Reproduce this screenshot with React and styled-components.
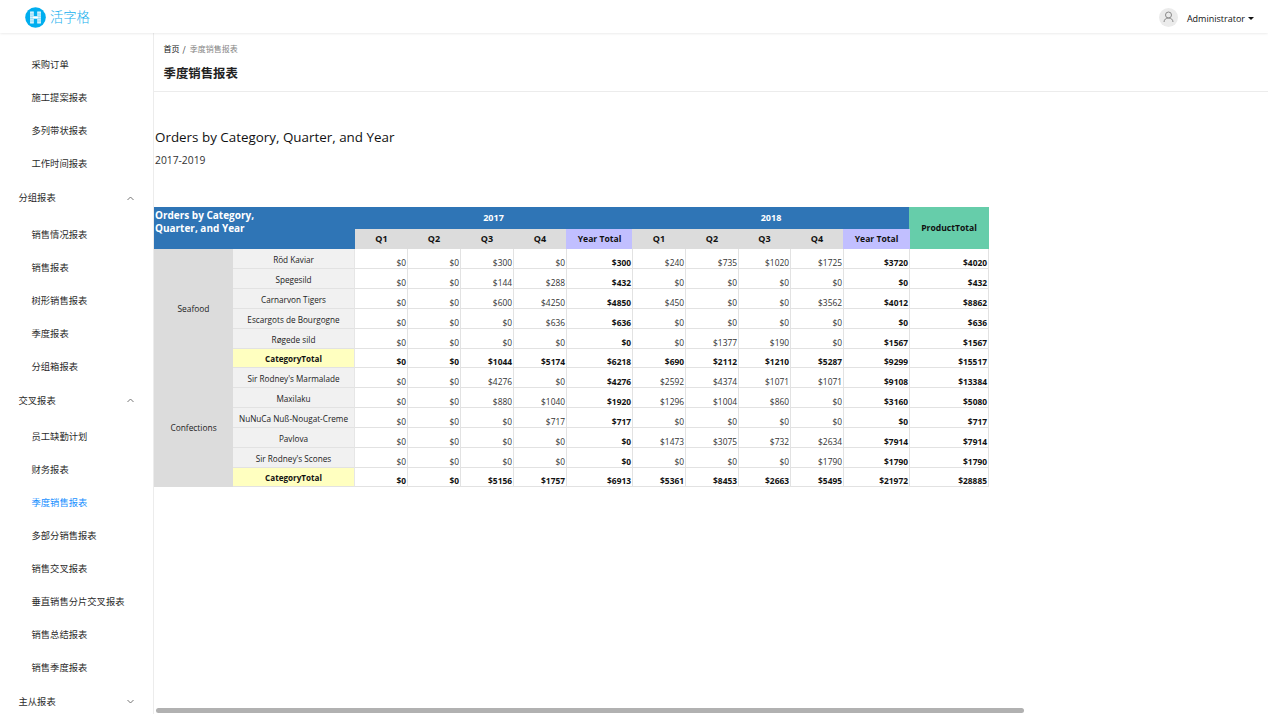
import React from "react";
import styled, { createGlobalStyle, css } from "styled-components";

const GlobalStyle = createGlobalStyle`
  * { box-sizing: border-box; }
  body {
    margin: 0;
    background: #fff;
    color: #222;
    font-family: "Open Sans", "Noto Sans CJK SC", sans-serif;
    overflow: hidden;
  }
`;

const Page = styled.div`
  height: 714px;
  display: flex;
  flex-direction: column;
`;

const Header = styled.header`
  height: 33px;
  flex: none;
  display: flex;
  align-items: center;
  justify-content: space-between;
  padding: 0 14px 0 25px;
  background: #fff;
  box-shadow: 0 0 3px rgba(0, 0, 0, 0.14);
  z-index: 1;
`;

const Brand = styled.div`
  display: flex;
  align-items: center;
  gap: 4px;
  color: #14b0ee;
  font: 300 13.3px/20px "Noto Sans CJK SC", sans-serif;
  padding-top: 1px;
  svg { display: block; }
`;

const User = styled.div`
  display: flex;
  align-items: center;
  font-size: 9px;
  color: #111;
  padding-top: 1px;
`;

const Avatar = styled.span`
  width: 19px;
  height: 19px;
  border-radius: 50%;
  background: #ebebeb;
  display: grid;
  place-items: center;
  margin-right: 9px;
`;

const UserName = styled.span`
  line-height: 16px;
  padding-top: 3px;
`;

const Caret = styled.span`
  margin: 2px 0 0 3px;
  border: 3px solid transparent;
  border-top-color: #111;
  border-bottom: 0;
`;

const Body = styled.div`
  flex: 1;
  display: flex;
  min-height: 0;
`;

const Sidebar = styled.nav`
  width: 154px;
  flex: none;
  border-right: 1px solid #ececec;
  padding-top: 14px;
  overflow: hidden;
  font: 9.3px/14px "Noto Sans CJK SC", sans-serif;
`;

const Item = styled.div`
  height: 33px;
  padding-left: 31.5px;
  display: flex;
  align-items: center;
  color: ${(p) => (p.$active ? "#1890ff" : "#2b2b2b")};
`;

const Group = styled.div`
  height: ${(p) => p.$height}px;
  padding: 0 19px 2px 18.5px;
  display: flex;
  align-items: center;
  justify-content: space-between;
  color: #2b2b2b;
  svg { margin-top: 2px; }
`;

const Main = styled.main`
  flex: 1;
  min-width: 0;
  display: flex;
  flex-direction: column;
`;

const PageHead = styled.div`
  height: 59px;
  flex: none;
  padding: 8px 0 0 9.5px;
  border-bottom: 1px solid #ececec;
  font-family: "Noto Sans CJK SC", sans-serif;
`;

const Crumbs = styled.div`
  display: flex;
  gap: 3px;
  font-size: 8px;
  line-height: 16px;
  color: #111;
`;

const Current = styled.span`
  color: #858585;
  margin-left: 1px;
`;

const Title = styled.h1`
  margin: 7px 0 0;
  font-size: 12.4px;
  line-height: 18px;
  font-weight: 700;
  color: #222;
`;

const Report = styled.section`
  flex: 1;
  padding-top: 35px;
`;

const ReportTitle = styled.div`
  padding-left: 1px;
  font-size: 13.4px;
  line-height: 20px;
  color: #111;
  white-space: nowrap;
`;

const ReportRange = styled.div`
  padding-left: 1px;
  margin: 5px 0 39px;
  font-size: 10.3px;
  line-height: 16px;
  color: #333;
`;

const Sheet = styled.div`
  display: grid;
  width: 835px;
  grid-template-columns: 79px 122px 53px 53px 53px 53px 66px 53px 53px 52px 53px 66px 79px;
  grid-template-rows: 22px 20px 20px 20px 20px 20px 20px 19px 20px 20px 20px 20px 20px 19px;
  font-size: 8.4px;
  line-height: 12px;
  color: #222;
`;

const center = css`
  display: flex;
  align-items: center;
  justify-content: center;
  white-space: nowrap;
`;

const Corner = styled.div`
  grid-row: span 2;
  grid-column: span 2;
  background: #2f75b6;
  color: #fff;
  font-size: 10px;
  line-height: 13px;
  font-weight: 700;
  padding: 2px 1px;
`;

/* Column headings start on the grid line to their left. */
const heading = css`
  ${center}
  margin-left: -1px;
  color: #111;
  font-weight: 700;
`;

const Year = styled.div`
  ${heading}
  grid-column: span 5;
  background: #2f75b6;
  color: #fff;
  font-size: 9px;
`;

const Grand = styled.div`
  ${heading}
  grid-row: span 2;
  background: #66cdaa;
  font-size: 8.6px;
`;

const Quarter = styled.div`
  ${heading}
  margin-left: ${(p) => (p.$first ? 0 : -1)}px;
  background: ${(p) => (p.$total ? "#c1bfff" : "#dcdcdc")};
  font-size: ${(p) => (p.$total ? 8.6 : 9)}px;
`;

const Category = styled.div`
  ${center}
  grid-row: span 6;
  padding-top: 1px;
  background: #dcdcdc;
`;

const Product = styled.div`
  ${center}
  padding-top: 2px;
  background: ${(p) => (p.$total ? "#ffffc0" : "#f1f1f1")};
  border-bottom: 1px solid #e2e2e2;
  border-right: 1px solid #e6e6e6;
  font-size: ${(p) => (p.$total ? 8.1 : 8.2)}px;
  font-weight: ${(p) => (p.$total ? 700 : 400)};
  color: ${(p) => (p.$total ? "#111" : "#222")};
`;

const Amount = styled.div`
  display: flex;
  align-items: flex-end;
  justify-content: flex-end;
  padding-right: 1px;
  line-height: 10px;
  border-right: 1px solid #e2e2e2;
  border-bottom: 1px solid #e2e2e2;
  font-weight: ${(p) => (p.$bold ? 700 : 400)};
  color: ${(p) => (p.$bold ? "#111" : "#333")};
`;

const ScrollBar = styled.div`
  width: 868px;
  height: 5px;
  margin: 0 0 1px 2px;
  border-radius: 3px;
  background: #b1b1b1;
`;

const menu = [
  { items: ["采购订单", "施工提案报表", "多列带状报表", "工作时间报表"] },
  { title: "分组报表", height: 38, open: true, items: ["销售情况报表", "销售报表", "树形销售报表", "季度报表", "分组箱报表"] },
  { title: "交叉报表", height: 37, open: true, items: ["员工缺勤计划", "财务报表", "季度销售报表", "多部分销售报表", "销售交叉报表", "垂直销售分片交叉报表", "销售总结报表", "销售季度报表"] },
  { title: "主从报表", height: 37, open: false, items: [] },
];

const data = [
  ["Seafood", [
    ["Röd Kaviar", 0, 0, 300, 0, 300, 240, 735, 1020, 1725, 3720, 4020],
    ["Spegesild", 0, 0, 144, 288, 432, 0, 0, 0, 0, 0, 432],
    ["Carnarvon Tigers", 0, 0, 600, 4250, 4850, 450, 0, 0, 3562, 4012, 8862],
    ["Escargots de Bourgogne", 0, 0, 0, 636, 636, 0, 0, 0, 0, 0, 636],
    ["Røgede sild", 0, 0, 0, 0, 0, 0, 1377, 190, 0, 1567, 1567],
    ["CategoryTotal", 0, 0, 1044, 5174, 6218, 690, 2112, 1210, 5287, 9299, 15517],
  ]],
  ["Confections", [
    ["Sir Rodney's Marmalade", 0, 0, 4276, 0, 4276, 2592, 4374, 1071, 1071, 9108, 13384],
    ["Maxilaku", 0, 0, 880, 1040, 1920, 1296, 1004, 860, 0, 3160, 5080],
    ["NuNuCa Nuß-Nougat-Creme", 0, 0, 0, 717, 717, 0, 0, 0, 0, 0, 717],
    ["Pavlova", 0, 0, 0, 0, 0, 1473, 3075, 732, 2634, 7914, 7914],
    ["Sir Rodney's Scones", 0, 0, 0, 0, 0, 0, 0, 0, 1790, 1790, 1790],
    ["CategoryTotal", 0, 0, 5156, 1757, 6913, 5361, 8453, 2663, 5495, 21972, 28885],
  ]],
];

const quarters = ["Q1", "Q2", "Q3", "Q4", "Year Total"];

const Chevron = ({ open }) => (
  <svg width="7" height="5" viewBox="0 0 7 5" fill="none" stroke="#666" strokeWidth="0.9">
    <path d={open ? "M0.5 4 3.5 1l3 3" : "M0.5 1 3.5 4l3-3"} />
  </svg>
);

const Logo = () => (
  <svg width="21" height="21" viewBox="0 0 21 21">
    <circle cx="10.5" cy="10.5" r="10.3" fill="#00aeef" />
    <path d="M5.2 4.500h3.500v12H5.200zM12.300 4.500h3.500v12h-3.500zM8.700 9h3.600v3H8.700z" fill="#fff" />
    <path d="M7 4.500v12M14 4.500v12M5.200 7h3.500M5.200 9.200h10.600M5.200 11.700h10.600M5.200 14h3.500M12.300 7h3.500M12.300 14h3.500" stroke="#00aeef" strokeWidth="0.35" />
  </svg>
);

export default function App() {
  return (
    <Page>
      <GlobalStyle />
      <Header>
        <Brand><Logo /><span>活字格</span></Brand>
        <User>
          <Avatar>
            <svg width="11" height="12" viewBox="0 0 11 12" fill="none" stroke="#8a8a8a" strokeWidth="1">
              <circle cx="5.5" cy="4" r="3" />
              <path d="M1 11c.2-2.6 1.9-4 4.500-4s4.300 1.400 4.500 4" />
            </svg>
          </Avatar>
          <UserName>Administrator</UserName>
          <Caret />
        </User>
      </Header>
      <Body>
        <Sidebar>
          {menu.map((g, i) => (
            <React.Fragment key={i}>
              {g.title && <Group $height={g.height}>{g.title}<Chevron open={g.open} /></Group>}
              {g.items.map((t) => <Item key={t} $active={t === "季度销售报表"}>{t}</Item>)}
            </React.Fragment>
          ))}
        </Sidebar>
        <Main>
          <PageHead>
            <Crumbs><span>首页</span><span>/</span><Current>季度销售报表</Current></Crumbs>
            <Title>季度销售报表</Title>
          </PageHead>
          <Report>
            <ReportTitle>Orders by Category, Quarter, and Year</ReportTitle>
            <ReportRange>2017-2019</ReportRange>
            <Sheet>
              <Corner>Orders by Category,<br />Quarter, and Year</Corner>
              <Year>2017</Year>
              <Year>2018</Year>
              <Grand>ProductTotal</Grand>
              {[2017, 2018].map((y) => quarters.map((q) => (
                <Quarter key={y + q} $first={y === 2017 && q === "Q1"} $total={q === "Year Total"}>{q}</Quarter>
              )))}
              {data.map(([name, rows]) => (
                <React.Fragment key={name}>
                  <Category>{name}</Category>
                  {rows.map(([product, ...values], r) => (
                    <React.Fragment key={product}>
                      <Product $total={r === 5}>{product}</Product>
                      {values.map((v, c) => (
                        <Amount key={c} $bold={r === 5 || c === 4 || c >= 9}>${v}</Amount>
                      ))}
                    </React.Fragment>
                  ))}
                </React.Fragment>
              ))}
            </Sheet>
          </Report>
          <ScrollBar />
        </Main>
      </Body>
    </Page>
  );
}
